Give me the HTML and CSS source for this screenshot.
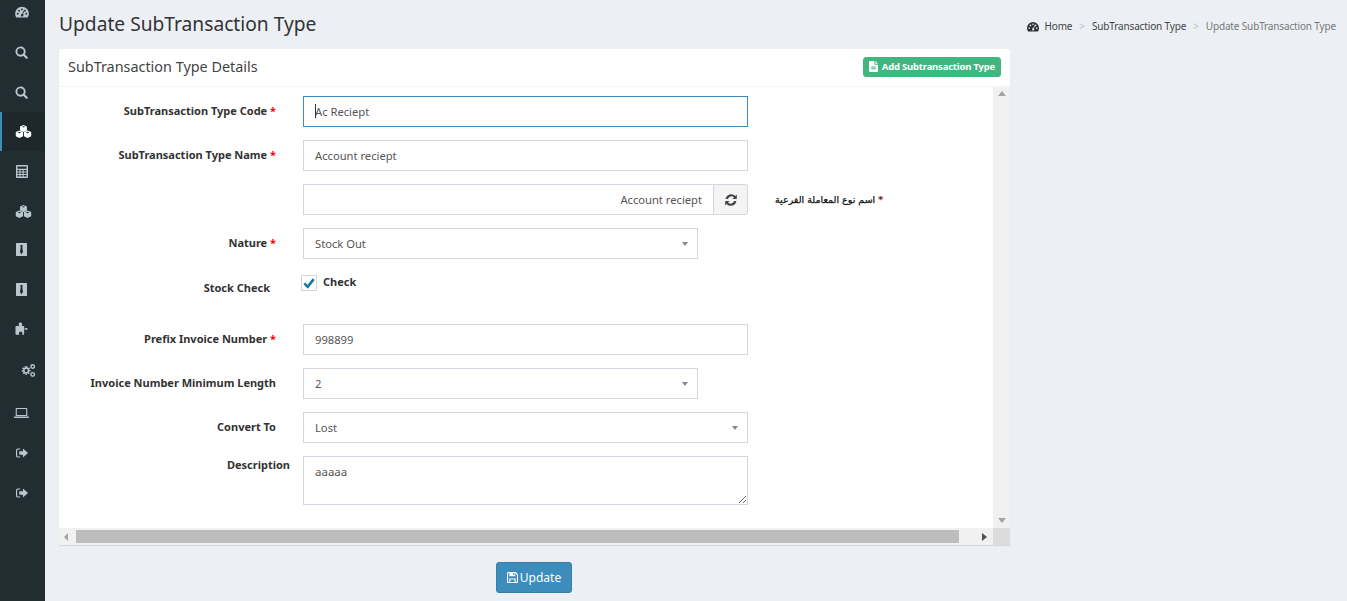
FILE: index.html
```html
<!DOCTYPE html>
<html lang="en">
<head>
<meta charset="utf-8">
<title>Update SubTransaction Type</title>
<link rel="stylesheet" href="styles.css">
</head>
<body>
<svg class="defs" width="0" height="0" aria-hidden="true">
  <symbol id="i-dash" viewBox="0 0 16 14"><path fill-rule="evenodd" d="M8 1a8 8 0 0 1 8 8c0 1.600-.4 3-1.200 4.200l-.5.300H1.700l-.5-.3A8 8 0 0 1 0 9a8 8 0 0 1 8-8zM3 8a1.100 1.100 0 1 0 0 2.200A1.100 1.100 0 0 0 3 8zm1.600-3.600a1.100 1.100 0 1 0 0 2.200 1.100 1.100 0 0 0 0-2.200zM8 2.900a1.100 1.100 0 1 0 0 2.200 1.100 1.100 0 0 0 0-2.200zm3.400 1.500a1.100 1.100 0 1 0 0 2.200 1.100 1.100 0 0 0 0-2.200zM13 8a1.100 1.100 0 1 0 0 2.200A1.100 1.100 0 0 0 13 8zM9.800 5.500 8.200 9.200a1.500 1.500 0 1 0 1 .4l1.400-3.800z"/></symbol>
  <symbol id="i-search" viewBox="0 0 14 14"><path fill="none" stroke="currentColor" stroke-width="2" d="M6 1.500a4.500 4.500 0 1 1 0 9 4.500 4.500 0 0 1 0-9z"/><path fill="none" stroke="currentColor" stroke-width="2.400" stroke-linecap="round" d="m9.600 9.600 3 3"/></symbol>
  <symbol id="i-cubes" viewBox="0 0 18 14">
    <path fill-rule="evenodd" d="M9 0l3.700 1.500v4.300L9 7.600 5.300 5.800V1.500zM9 1.300 7.200 2 9 2.800l1.800-.8z"/>
    <path fill-rule="evenodd" d="M4.600 6l3.900 1.600v4.500L4.600 14 .7 12.100V7.600zM4.600 7.300l-1.900.8 1.900.8 1.900-.8z"/>
    <path fill-rule="evenodd" d="M13.400 6l3.900 1.600v4.500L13.400 14l-3.900-1.900V7.600zM13.400 7.300l-1.900.8 1.900.8 1.900-.8z"/>
  </symbol>
  <symbol id="i-calc" viewBox="0 0 13 14"><path fill-rule="evenodd" d="M1 0h11a1 1 0 0 1 1 1v12a1 1 0 0 1-1 1H1a1 1 0 0 1-1-1V1a1 1 0 0 1 1-1zm.5 1.500v2.500h10V1.500zm0 3.800v1.700h2.200V5.300zm3.400 0v1.700h2.200V5.300zm3.400 0v1.700h3.200V5.300zM1.500 8v1.700h2.200V8zm3.400 0v1.700h2.200V8zm3.400 0v1.700h3.200V8zm-6.800 2.700v1.800h2.200v-1.800zm3.400 0v1.800h2.200v-1.800zm3.400 0v1.800h3.200v-1.800z"/></symbol>
  <symbol id="i-tie" viewBox="0 0 12 14"><path fill-rule="evenodd" d="M.5 0h11a.5.5 0 0 1 .5.5v13a.5.5 0 0 1-.5.5H.5a.5.5 0 0 1-.5-.5V.5A.5.5 0 0 1 .5 0zM4.800 2v2h.4L4.300 9.500 6 12.500 7.700 9.500 6.800 4h.4V2z"/></symbol>
  <symbol id="i-puzzle" viewBox="0 0 14 14"><path d="M0 5a.8.8 0 0 1 .8-.8h3c.3-.4-.4-1-.4-1.900C3.400 1 4.300.5 5.300.5s1.900.5 1.900 1.800c0 .9-.7 1.500-.4 1.900h2.500v3c.5.300 1 .100 1.400-.4.500-.5 2.300-.4 2.300.7s-1.800 1.200-2.300.7c-.4-.500-.9-.6-1.400-.4V13a.8.8 0 0 1-.8.800H7.100c-.3-.4.400-1 .4-1.700 0-1.100-.9-1.500-1.900-1.500s-1.900.4-1.900 1.500c0 .7.700 1.300.4 1.700H.8A.8.8 0 0 1 0 13z"/></symbol>
  <symbol id="i-cogs" viewBox="0 0 16 14"><path fill="none" stroke="currentColor" stroke-width="2.600" stroke-dasharray="1.500 .9" d="M5.500 3.600a3.400 3.400 0 1 1 0 6.800 3.400 3.400 0 0 1 0-6.800z"/><path fill="none" stroke="currentColor" stroke-width="1.400" d="M5.500 4.500a2.500 2.500 0 1 1 0 5 2.500 2.500 0 0 1 0-5z"/><path fill="none" stroke="currentColor" stroke-width="1.500" d="M12.500.8a1.900 1.900 0 1 1 0 3.800 1.900 1.900 0 0 1 0-3.800zM12.500 9.300a1.900 1.900 0 1 1 0 3.800 1.900 1.900 0 0 1 0-3.800z"/></symbol>
  <symbol id="i-laptop" viewBox="0 0 15 12"><path fill-rule="evenodd" d="M2.500 1h10a.8.8 0 0 1 .8.8V9H1.700V1.800a.8.8 0 0 1 .8-.8zm.3 1v6h9.400V2zM0 9.500h15v.7a.8.8 0 0 1-.8.800H.8a.8.8 0 0 1-.8-.8z"/></symbol>
  <symbol id="i-out" viewBox="0 0 13 12"><path d="M4.500 1H2a2 2 0 0 0-2 2v6a2 2 0 0 0 2 2h2.500V9.800H2.200a.9.900 0 0 1-.9-.9V3.100c0-.5.400-.9.900-.9h2.300z"/><path d="M7.500 1 13 6l-5.500 5V8H3.500V4h4z"/></symbol>
  <symbol id="i-refresh" viewBox="0 0 12 12"><path d="M11.800.6v4.400H7.400l1.600-1.600A3.700 3.700 0 0 0 2.900 5H.6a5.700 5.700 0 0 1 9.800-3zM.2 11.400V7h4.400L3 8.600A3.700 3.700 0 0 0 9.100 7h2.300a5.700 5.700 0 0 1-9.800 3z"/></symbol>
  <symbol id="i-file" viewBox="0 0 10 12"><path fill-rule="evenodd" d="M1 0h5v3.300c0 .4.300.7.700.7H10v7a1 1 0 0 1-1 1H1a1 1 0 0 1-1-1V1a1 1 0 0 1 1-1zm6 0 3 3H7zM2.500 6v1h5V6zm0 2v1h5V8z"/></symbol>
  <symbol id="i-save" viewBox="0 0 12 12"><path fill-rule="evenodd" d="M1 0h8.500L12 2.500V11a1 1 0 0 1-1 1H1a1 1 0 0 1-1-1V1a1 1 0 0 1 1-1zm.2 1.200v9.600h1.300V7h7v3.800h1.300V3L9 1.200v3.300H2.500V1.200zm2.500 7v2.600h4.600V8.200zM6.500 1.300v2h1.500v-2z"/></symbol>
</svg>

<div class="app">
  <nav class="sidebar">
    <a class="nav-item nav-first"><svg class="ic ic-dash"><use href="#i-dash"/></svg></a>
    <a class="nav-item"><svg class="ic ic-search"><use href="#i-search"/></svg></a>
    <a class="nav-item"><svg class="ic ic-search"><use href="#i-search"/></svg></a>
    <a class="nav-item nav-active"><svg class="ic ic-cubes"><use href="#i-cubes"/></svg></a>
    <a class="nav-item"><svg class="ic ic-calc"><use href="#i-calc"/></svg></a>
    <a class="nav-item nav-wide"><svg class="ic ic-cubes"><use href="#i-cubes"/></svg></a>
    <a class="nav-item nav-up"><svg class="ic ic-tie"><use href="#i-tie"/></svg></a>
    <a class="nav-item nav-up"><svg class="ic ic-tie"><use href="#i-tie"/></svg></a>
    <a class="nav-item nav-upper"><svg class="ic ic-puzzle"><use href="#i-puzzle"/></svg></a>
    <a class="nav-item nav-shift"><svg class="ic ic-cogs"><use href="#i-cogs"/></svg></a>
    <a class="nav-item nav-down"><svg class="ic ic-laptop"><use href="#i-laptop"/></svg></a>
    <a class="nav-item nav-down"><svg class="ic ic-out"><use href="#i-out"/></svg></a>
    <a class="nav-item nav-down"><svg class="ic ic-out"><use href="#i-out"/></svg></a>
  </nav>

  <main class="content">
    <header class="page-head">
      <h1 class="page-title">Update SubTransaction Type</h1>
      <ol class="crumbs">
        <li class="crumb crumb-home"><svg class="ic-crumb"><use href="#i-dash"/></svg>Home</li>
        <li class="crumb-sep">&gt;</li>
        <li class="crumb">SubTransaction Type</li>
        <li class="crumb-sep">&gt;</li>
        <li class="crumb crumb-current">Update SubTransaction Type</li>
      </ol>
    </header>

    <section class="card">
      <div class="card-head">
        <h2 class="card-title">SubTransaction Type Details</h2>
        <button class="btn-add" type="button"><svg class="ic-file"><use href="#i-file"/></svg>Add Subtransaction Type</button>
      </div>
      <div class="scroll-wrap">
        <div class="scroll-main">
          <form class="form">
            <div class="row">
              <label class="label">SubTransaction Type Code <span class="req">*</span></label>
              <div class="caret-wrap"><input class="input input-focus" type="text" value="Ac Reciept"></div>
            </div>
            <div class="row">
              <label class="label">SubTransaction Type Name <span class="req">*</span></label>
              <input class="input" type="text" value="Account reciept">
            </div>
            <div class="row">
              <span class="label"></span>
              <div class="group">
                <input class="input input-rtl" type="text" value="Account reciept" dir="rtl">
                <span class="addon"><svg class="ic-refresh"><use href="#i-refresh"/></svg></span>
              </div>
              <label class="label-ar" dir="rtl"><span class="req">*</span> اسم نوع المعاملة الفرعية</label>
            </div>
            <div class="row">
              <label class="label">Nature <span class="req">*</span></label>
              <div class="select select-short">Stock Out</div>
            </div>
            <div class="row row-check">
              <label class="label label-stock">Stock Check</label>
              <div class="check-wrap">
                <span class="checkbox"><svg class="ic-check" viewBox="0 0 14 14"><path d="M1.500 7.500 5.500 11.500 12.500 2.500" fill="none" stroke="#1379a8" stroke-width="3"/></svg></span>
                <span class="check-text">Check</span>
              </div>
            </div>
            <div class="row">
              <label class="label">Prefix Invoice Number <span class="req">*</span></label>
              <input class="input" type="text" value="998899">
            </div>
            <div class="row">
              <label class="label">Invoice Number Minimum Length</label>
              <div class="select select-short">2</div>
            </div>
            <div class="row">
              <label class="label">Convert To</label>
              <div class="select">Lost</div>
            </div>
            <div class="row row-desc">
              <label class="label label-desc">Description</label>
              <textarea class="textarea">aaaaa</textarea>
            </div>
          </form>
        </div>
        <div class="vbar"><span class="arr arr-up"></span><span class="arr arr-down"></span></div>
        <div class="hbar">
          <span class="harr harr-left"></span>
          <span class="hthumb"></span>
          <span class="harr harr-right"></span>
          <span class="hcorner"></span>
        </div>
      </div>
    </section>

    <div class="actions">
      <button class="btn-update" type="button"><svg class="ic-save"><use href="#i-save"/></svg>Update</button>
    </div>
  </main>
</div>
</body>
</html>
```

FILE: styles.css
```css
* { box-sizing: border-box; }
html, body { margin: 0; height: 100%; overflow: hidden; }
body {
  background: #ecf0f5;
  color: #333;
  font-family: "Noto Sans", "Open Sans", "Liberation Sans", sans-serif;
  font-size: 12px;
}
.defs { position: absolute; }
.app { display: flex; height: 601px; }

.sidebar { width: 45px; flex: none; background: #222d32; display: flex; flex-direction: column; color: #b8c7ce; }
.nav-item { height: 40px; flex: none; display: flex; align-items: center; justify-content: center; color: #b8c7ce; padding-right: 2px; }
.nav-first { height: 32px; align-items: flex-start; padding-top: 6px; }
.nav-item svg { fill: currentColor; }
.nav-active { height: 39px; background: #1e282c; border-left: 2px solid #3c8dbc; color: #fff; padding-right: 0; }
.nav-wide { padding: 0 0 0 2px; }
.nav-up { padding-bottom: 4px; }
.nav-upper { padding-bottom: 6px; }
.nav-shift { padding: 0 0 2px 11px; }
.nav-down { padding-top: 4px; }
.ic-dash { width: 14px; height: 12px; }
.ic-search { width: 13px; height: 13px; }
.ic-cubes { width: 17px; height: 13px; }
.ic-calc { width: 12px; height: 13px; }
.ic-tie { width: 11px; height: 13px; }
.ic-puzzle { width: 14px; height: 13px; }
.ic-cogs { width: 15px; height: 13px; }
.ic-laptop { width: 15px; height: 12px; }
.ic-out { width: 12px; height: 12px; }

.content { flex: 1; min-width: 0; padding-left: 14px; }
.page-head { height: 49px; display: flex; align-items: flex-start; justify-content: space-between; }
.page-title { margin: 10px 0 0; font-size: 19.200px; font-weight: 400; line-height: 28px; color: #333; }
.crumbs { list-style: none; margin: 18px 11px 0 0; padding: 0; display: flex; gap: 7px; font-size: 10px; letter-spacing: -.15px; line-height: 16px; color: #444; }
.crumb-home { display: flex; align-items: center; }
.ic-crumb { width: 12px; height: 11px; margin-right: 6px; fill: #333; }
.crumb-sep { color: #bbb; }
.crumb-current { color: #777; }

.card { width: 951px; background: #fff; border-radius: 3px 3px 0 0; box-shadow: 0 1px 1px rgba(0,0,0,.1); }
.card-head { height: 38px; display: flex; align-items: center; justify-content: space-between; padding: 0 9px 2px; border-bottom: 1px solid #f4f4f4; }
.card-title { margin: 0; font-size: 14.400px; font-weight: 400; color: #444; }
.btn-add { height: 20px; padding: 0 5px; border: 1px solid #3fb77f; border-radius: 3px; background: #3fb77f; color: #fff; font: 700 9.500px "Noto Sans", sans-serif; letter-spacing: -.2px; display: flex; align-items: center; }
.ic-file { width: 9px; height: 11px; margin-right: 4px; fill: #fff; }

.scroll-wrap { display: grid; grid-template-columns: 934px 17px; grid-template-rows: 441px 17px; }
.scroll-main { overflow: hidden; padding-top: 9px; }
.form { display: flex; flex-direction: column; gap: 13px; }
.row { display: flex; align-items: flex-start; min-height: 31px; }
.label { flex: none; width: 217px; margin-right: 27px; text-align: right; font-weight: 700; line-height: 16px; padding-top: 7px; color: #333; font-size: 11px; }
.req { color: #f00; }
.label-stock { padding-top: 10px; padding-right: 6px; }
.label-desc { margin-right: 13px; width: 231px; padding-top: 1px; }
.input, .select, .textarea {
  width: 445px; height: 31px; border: 1px solid #d2d6de; background: #fff; padding: 0 11px; color: #555;
  font: 11.200px/29px "Noto Sans", sans-serif; outline: 0;
}
.input-focus { border-color: #3c8dbc; }
.caret-wrap { position: relative; width: 445px; height: 31px; }
.caret-wrap::after { content: ""; position: absolute; left: 12px; top: 8px; width: 1px; height: 14px; background: #333; }
.group { display: flex; width: 445px; }
.input-rtl { flex: 1; min-width: 0; width: auto; border-right: 0; border-radius: 0; }
.addon { flex: none; width: 35px; height: 31px; border: 1px solid #d2d6de; background: #f4f4f4; border-radius: 0 3px 3px 0; display: flex; align-items: center; justify-content: center; }
.ic-refresh { width: 12px; height: 12px; fill: #444; }
.label-ar { margin-left: 27px; padding-top: 8px; font: 400 9.500px/16px "DejaVu Sans", sans-serif; color: #111; -webkit-text-stroke: .25px #111; }
.select { position: relative; }
.select::after { content: ""; position: absolute; right: 9px; top: 13px; border: 3px solid transparent; border-top: 4px solid #888; border-bottom: 0; }
.select-short { width: 395px; }
.row-check { min-height: 47px; margin-top: -2px; margin-bottom: -6px; }
.check-wrap { display: flex; align-items: flex-start; margin-left: -2px; padding-top: 5px; }
.checkbox { width: 16px; height: 16px; border: 1px solid #d2d6de; display: flex; align-items: center; justify-content: center; margin-right: 6px; }
.ic-check { width: 12px; height: 12px; }
.check-text { font-weight: 700; font-size: 11px; line-height: 14px; }
.textarea { height: 49px; padding-top: 7px; font-size: 11.500px; line-height: 16px; display: block; resize: vertical; }

.vbar { background: #f1f1f1; position: relative; }
.arr { position: absolute; left: 5px; border: 4px solid transparent; }
.arr-up { top: 4px; border-top: 0; border-bottom: 5px solid #a3a3a3; }
.arr-down { bottom: 5px; border-bottom: 0; border-top: 5px solid #a3a3a3; }
.hbar { grid-column: 1 / 3; display: flex; align-items: center; background: #f1f1f1; height: 17px; position: relative; }
.harr { width: 0; height: 0; border: 4px solid transparent; }
.harr-left { margin-left: 5px; margin-right: 8px; border-left: 0; border-right: 4px solid #a3a3a3; }
.hthumb { width: 883px; height: 13px; background: #bdbdbd; }
.harr-right { margin-left: 23px; border-right: 0; border-left: 5px solid #505050; }
.hcorner { margin-left: auto; width: 17px; height: 17px; background: #dcdcdc; }

.actions { padding: 17px 0 0 437px; }
.btn-update { width: 76px; height: 31px; border: 1px solid #367fa9; border-radius: 3px; background: #3c8dbc; color: #fff; font: 12px "Noto Sans", sans-serif; display: flex; align-items: center; justify-content: center; padding: 0; }
.ic-save { width: 11px; height: 11px; margin-right: 2px; fill: #fff; }
```
